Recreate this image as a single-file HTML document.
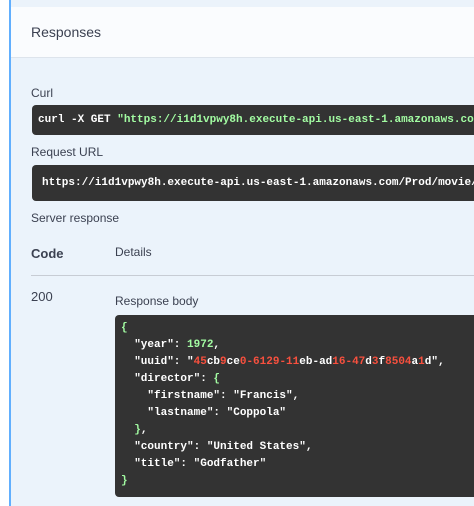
<!DOCTYPE html><html><head><style>
body{margin:0;width:474px;height:506px;overflow:hidden;background:#fff;font-family:"Liberation Sans",sans-serif;color:#3b4151;position:relative}
.wrap{position:absolute;left:9px;top:0;width:465px;height:506px;background:#ebf3fb;border-left:2px solid #61affe;box-sizing:border-box;overflow:hidden}
.hdr{position:absolute;left:0;top:7px;width:100%;height:50px;background:#fafcfe;border-bottom:1px solid #dde4ec}
.t{position:absolute;font-size:12px;white-space:nowrap}
.code{position:absolute;background:#333;border-radius:4px;font-family:"Liberation Mono",monospace;font-weight:bold;font-size:11px;color:#fff;white-space:pre;overflow:hidden}
.g{color:#a2fca2}.r{color:#f8503e}
</style></head><body>
<div class="wrap">
<div class="hdr"><div class="t" style="left:20px;top:17px;font-size:14px">Responses</div></div>
<div class="t" style="left:20px;top:86px">Curl</div>
<div class="code" style="left:21px;top:105px;width:440px;height:30px;line-height:30px;padding-left:6px">curl -X GET <span class="g">"https://i1d1vpwy8h.execute-api.us-east-1.amazonaws.com/Prod/movie/"</span></div>
<div class="t" style="left:20px;top:145px">Request URL</div>
<div class="code" style="left:21px;top:165px;width:440px;height:36px;line-height:36px;padding-left:10px">https://i1d1vpwy8h.execute-api.us-east-1.amazonaws.com/Prod/movie/</div>
<div class="t" style="left:20px;top:211px">Server response</div>
<div class="t" style="left:20px;top:246px;font-weight:bold;font-size:13px">Code</div>
<div class="t" style="left:104px;top:245px">Details</div>
<div style="position:absolute;left:20px;top:275px;width:450px;height:1px;background:#c7ccd4"></div>
<div class="t" style="left:20px;top:289px;font-size:13px">200</div>
<div class="t" style="left:104px;top:294px">Response body</div>
<div class="code" style="left:104px;top:315px;width:370px;height:182px;line-height:17px;padding:5px 0 0 6px;box-sizing:border-box"><span class="g">{</span>
  "year": <span class="g">1972</span>,
  "uuid": "<span class="r">45</span>cb<span class="r">9</span>ce<span class="r">0-6129-11</span>eb-ad<span class="r">16-47</span>d<span class="r">3</span>f<span class="r">8504</span>a<span class="r">1</span>d",
  "director": <span class="g">{</span>
    "firstname": "Francis",
    "lastname": "Coppola"
  <span class="g">}</span>,
  "country": "United States",
  "title": "Godfather"
<span class="g">}</span></div>
</div>
</body></html>
